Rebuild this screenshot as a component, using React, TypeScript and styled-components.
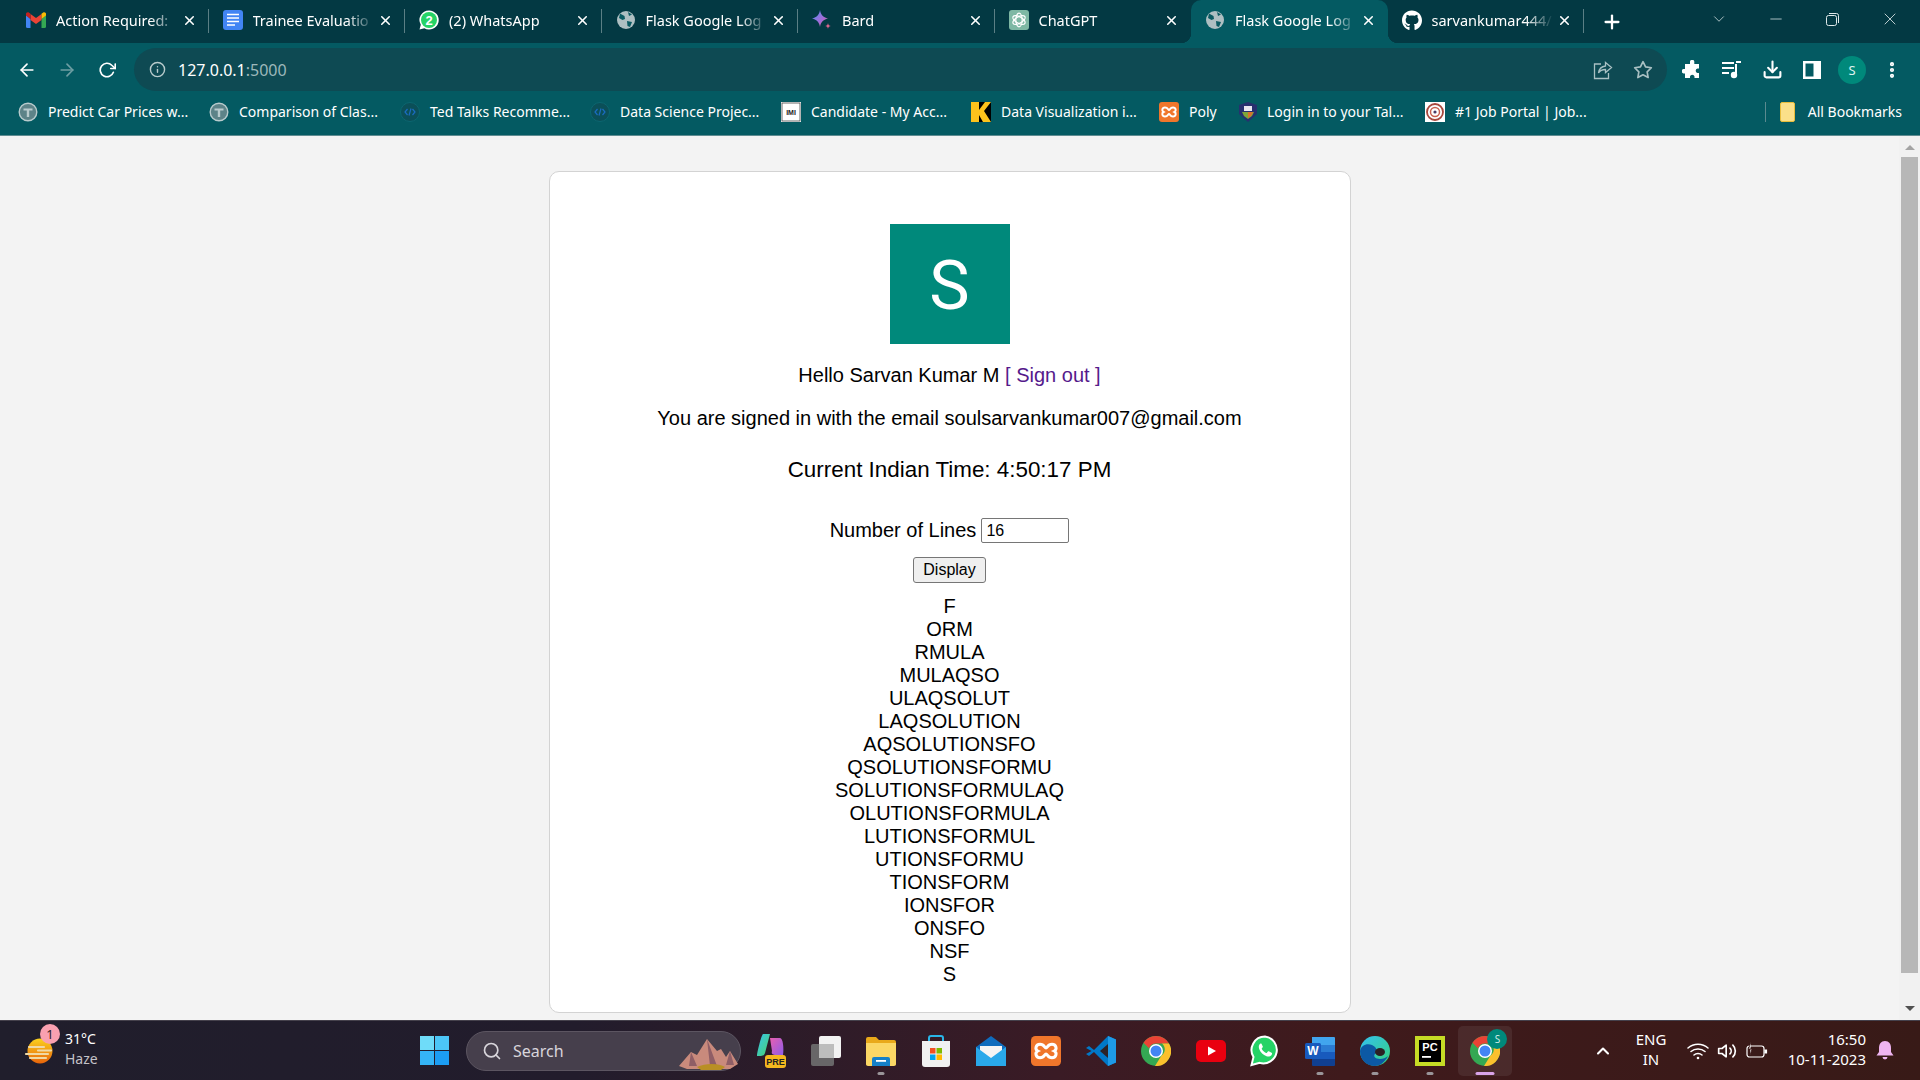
import React from 'react';
import styled, { createGlobalStyle } from 'styled-components';
import { FaGithub } from 'react-icons/fa';
import { FiArrowLeft, FiArrowRight, FiRotateCw, FiInfo, FiMinus, FiX, FiPlus, FiChevronDown, FiChevronUp, FiStar, FiSearch, FiVolume2, FiMoreVertical, FiDownload } from 'react-icons/fi';

const GlobalStyle = createGlobalStyle`
  html, body { margin: 0; padding: 0; height: 100%; overflow: hidden; }
  body { font-family: "Liberation Sans", Arial, sans-serif; }
  * { box-sizing: border-box; }
`;

const Shell = styled.div`
  width: 1920px;
  height: 1080px;
  display: flex;
  flex-direction: column;
  overflow: hidden;
`;

const UI_FONT = `"Noto Sans", "Open Sans", sans-serif`;

/* tab strip */
const TabStrip = styled.div`
  height: 43px;
  flex: none;
  display: flex;
  padding-left: 12px;
  background: #033943;
  font-family: ${UI_FONT};
`;

const Tab = styled.div<{ $active?: boolean; $noDivider?: boolean }>`
  position: relative;
  width: 196.5px;
  flex: none;
  display: flex;
  align-items: center;
  padding: 0 12px 3px 14px;
  color: #fff;
  font-size: 14.5px;
  background: ${(p) => (p.$active ? '#045a62' : 'transparent')};
  border-radius: ${(p) => (p.$active ? '10px 10px 0 0' : '0')};

  &::after {
    content: '';
    position: absolute;
    right: 0;
    top: 9px;
    width: 1px;
    height: 24px;
    background: #5b7f85;
    display: ${(p) => (p.$active || p.$noDivider ? 'none' : 'block')};
  }
`;

const TabFoot = styled.span<{ $side: 'left' | 'right' }>`
  position: absolute;
  bottom: 0;
  width: 10px;
  height: 10px;
  ${(p) => (p.$side === 'left' ? 'left: -10px;' : 'right: -10px;')}
  background: radial-gradient(circle at ${(p) => (p.$side === 'left' ? '0 0' : '100% 0')}, transparent 10px, #045a62 10.500px);
`;

const TabIcon = styled.span`
  width: 20px;
  height: 20px;
  flex: none;
  display: flex;
  align-items: center;
  justify-content: center;
  margin-right: 10px;
`;

const TabTitle = styled.span`
  flex: 1;
  min-width: 0;
  white-space: nowrap;
  mask-image: linear-gradient(90deg, #000 78%, rgba(0, 0, 0, 0.05) 100%);
`;

const TabClose = styled.span`
  flex: none;
  display: flex;
  margin-left: 5px;
  color: #fff;
`;

const NewTab = styled.span`
  margin-left: 17px;
  display: flex;
  align-items: center;
  color: #fff;
`;

const WindowControls = styled.div`
  margin-left: auto;
  padding-right: 2px;
  display: flex;
  align-items: flex-start;
`;

const WindowButton = styled.span`
  width: 57px;
  height: 38px;
  display: flex;
  align-items: center;
  justify-content: center;
  color: #dfe9ea;
`;

/* toolbar */
const Toolbar = styled.div`
  height: 49px;
  flex: none;
  display: flex;
  align-items: center;
  background: #045a62;
  padding: 4px 0 0 7px;
  font-family: ${UI_FONT};
`;

const NavButton = styled.span<{ $dim?: boolean }>`
  width: 40px;
  height: 40px;
  flex: none;
  display: flex;
  align-items: center;
  justify-content: center;
  color: ${(p) => (p.$dim ? '#6e9ea3' : '#fff')};
`;

const Omnibox = styled.div`
  width: 1533px;
  height: 43px;
  margin: 0 5px 0 7px;
  flex: none;
  display: flex;
  align-items: center;
  border-radius: 22px;
  background: #0e4a53;
  padding: 0 4px 0 15px;
  color: #fff;
  font-size: 16px;
`;

const Url = styled.span`
  margin-left: 12px;
  flex: 1;
  & > em {
    font-style: normal;
    color: #9db8bb;
  }
`;

const OmniAction = styled.span`
  width: 40px;
  display: flex;
  justify-content: center;
  color: #a9c0c3;
`;

const ProfileDot = styled.span`
  width: 28px;
  height: 28px;
  border-radius: 50%;
  background: #00897b;
  color: #dff3f0;
  font-size: 13px;
  display: flex;
  align-items: center;
  justify-content: center;
`;

/* bookmarks */
const BookmarkBar = styled.div`
  height: 44px;
  flex: none;
  display: flex;
  align-items: center;
  background: #045a62;
  padding: 0 0 4px 18px;
  color: #fff;
  font-family: ${UI_FONT};
  font-size: 14px;
  border-bottom: 1px solid #5f8c91;
`;

const Bookmark = styled.div<{ $w: number }>`
  width: ${(p) => p.$w}px;
  flex: none;
  display: flex;
  align-items: center;
  gap: 10px;
  white-space: nowrap;
`;

const BookmarkEnd = styled.div`
  margin-left: auto;
  display: flex;
  align-items: center;
  padding-right: 18px;
  white-space: nowrap;
`;

const BookmarkDivider = styled.span`
  width: 1px;
  height: 20px;
  background: #5b8a8f;
  margin-right: 14px;
`;

const FolderIcon = styled.span`
  width: 15px;
  height: 20px;
  border-radius: 2px;
  background: #fbe08a;
  border: 1px solid #e8bd3c;
  margin-right: 13px;
`;

/* page */
const Viewport = styled.div`
  flex: 1;
  min-height: 0;
  display: flex;
  background: #f3f3f3;
`;

const Page = styled.main`
  flex: 1;
  min-width: 0;
  overflow: hidden;
  padding-top: 35px;
`;

const Card = styled.section`
  width: 802px;
  height: 842px;
  margin: 0 auto;
  padding-top: 52px;
  background: #fff;
  border: 1px solid #d3d3d3;
  border-radius: 10px;
  display: flex;
  flex-direction: column;
  align-items: center;
  color: #000;
  font-size: 20px;
  line-height: 23px;
`;

const Avatar = styled.div`
  width: 120px;
  height: 120px;
  flex: none;
  background: #00897b;
  color: #fff;
  font-family: Roboto, sans-serif;
  font-size: 68px;
  line-height: 124px;
  text-align: center;
`;

const Greeting = styled.p`
  margin: 20px 0 0;
`;

const SignOut = styled.a`
  color: #551a8b;
  text-decoration: none;
`;

const EmailLine = styled.p`
  margin: 20px 0 0;
`;

const Clock = styled.h2`
  margin: 26px 0 0;
  font-size: 22.4px;
  line-height: 28px;
  font-weight: 400;
`;

const LinesForm = styled.form`
  margin-top: 34px;
  display: flex;
  flex-direction: column;
  align-items: center;
`;

const FieldRow = styled.div`
  display: flex;
  align-items: center;
  gap: 5px;
`;

const LinesInput = styled.input`
  width: 88px;
  height: 25px;
  padding: 1px 4px;
  border: 1px solid #767676;
  border-radius: 2px;
  background: #fff;
  font: 16px "Liberation Sans", Arial, sans-serif;
  color: #000;
`;

const DisplayButton = styled.button`
  width: 73px;
  height: 26px;
  margin-top: 14px;
  padding: 0;
  background: #efefef;
  border: 1px solid #767676;
  border-radius: 3px;
  font: 16px "Liberation Sans", Arial, sans-serif;
  color: #000;
`;

const Pattern = styled.div`
  margin-top: 12px;
  text-align: center;
`;

const PatternLine = styled.div`
  height: 23px;
`;

const Scrollbar = styled.aside`
  width: 21px;
  flex: none;
  display: flex;
  flex-direction: column;
  align-items: center;
  background: #f1f1f1;
  padding: 9px 0;
`;

const Thumb = styled.div`
  width: 17px;
  height: 816px;
  margin: 7px 0 auto;
  background: #b7b7b7;
`;

const ArrowUp = styled.span`
  width: 0;
  height: 0;
  border: 5px solid transparent;
  border-top: 0;
  border-bottom: 5px solid #a3a3a3;
`;

const ArrowDown = styled.span`
  width: 0;
  height: 0;
  border: 5px solid transparent;
  border-bottom: 0;
  border-top: 5px solid #505050;
`;

/* taskbar */
const Taskbar = styled.footer`
  height: 60px;
  flex: none;
  display: flex;
  align-items: center;
  color: #fff;
  font-family: ${UI_FONT};
  border-top: 1px solid #45414c;
  background: linear-gradient(90deg, #201e2c 0%, #221c2c 30%, #3a1b25 55%, #3f1a1c 70%, #381a17 100%);
`;

const Weather = styled.div`
  width: 420px;
  flex: none;
  display: flex;
  align-items: center;
  padding-left: 24px;
`;

const WeatherIcon = styled.span`
  position: relative;
  width: 30px;
  height: 30px;
  margin-right: 11px;
  flex: none;
`;

const WeatherBadge = styled.span`
  position: absolute;
  top: -12px;
  right: -6px;
  width: 20px;
  height: 20px;
  border-radius: 50%;
  background: #f9a0b0;
  color: #2b1a1e;
  font-size: 13px;
  line-height: 20px;
  text-align: center;
`;

const TwoLines = styled.div<{ $align?: string; $size?: number }>`
  margin-top: -3px;
  font-size: ${(p) => p.$size || 14}px;
  line-height: 20px;
  text-align: ${(p) => p.$align || 'left'};
`;

const Muted = styled.div`
  color: #c4c2c8;
`;

const StartLogo = styled.div`
  width: 29px;
  height: 29px;
  flex: none;
  display: grid;
  grid-template-columns: 1fr 1fr;
  gap: 1px;
  margin-right: 17px;
`;

const StartPane = styled.span<{ $c: string }>`
  background: ${(p) => p.$c};
`;

const SearchPill = styled.div`
  position: relative;
  width: 275px;
  height: 40px;
  flex: none;
  display: flex;
  align-items: center;
  gap: 11px;
  padding-left: 15px;
  border-radius: 20px;
  background: #463f4c;
  border: 1px solid #5c5561;
  color: #d8d5db;
  font-size: 16px;
`;

const SearchArt = styled.span`
  position: absolute;
  right: 1px;
  top: 6px;
  display: flex;
`;

const Apps = styled.div`
  width: 769px;
  flex: none;
  display: flex;
  align-items: center;
  padding-left: 3px;
`;

const AppSlot = styled.div<{ $active?: boolean }>`
  position: relative;
  width: 54.900px;
  height: 50px;
  flex: none;
  display: flex;
  align-items: center;
  justify-content: center;
  border-radius: 5px;
  background: ${(p) => (p.$active ? 'rgba(255,255,255,0.07)' : 'transparent')};
`;

const RunningDot = styled.span<{ $active?: boolean }>`
  position: absolute;
  bottom: 1px;
  left: 50%;
  transform: translateX(-50%);
  width: ${(p) => (p.$active ? '19px' : '7px')};
  height: 3px;
  border-radius: 2px;
  background: ${(p) => (p.$active ? '#d9a3e8' : '#9a9599')};
`;

const ChromeBadge = styled.span`
  position: absolute;
  top: 3px;
  right: 5px;
  width: 20px;
  height: 20px;
  border-radius: 50%;
  background: #00897b;
  color: #cfe9e5;
  font-size: 10px;
  line-height: 20px;
  text-align: center;
`;

const Tray = styled.div`
  flex: 1;
  display: flex;
  align-items: center;
  padding-left: 78px;
`;

const TrayIcon = styled.span<{ $w: number }>`
  width: ${(p) => p.$w}px;
  flex: none;
  display: flex;
  justify-content: center;
`;

const TrayClock = styled.div`
  width: 94px;
  flex: none;
`;

/* drawings */
const Gmail = () => (
  <svg width="20" height="16" viewBox="0 0 20 16">
    <path d="M0 3v11.500A1.500 1.500 0 0 0 1.500 16H4.500V7z" fill="#4285f4" />
    <path d="M20 3v11.500a1.500 1.500 0 0 1-1.500 1.500H15.500V7z" fill="#34a853" />
    <path d="M4.500 8 10 12l5.500-4V2L10 6 4.500 2z" fill="#ea4335" />
    <path d="M0 3.500 4.500 7V1.800L2.800.5C1.500-.400 0 .600 0 2z" fill="#c5221f" />
    <path d="M20 3.500 15.500 7V1.800L17.200.5C18.500-.400 20 .600 20 2z" fill="#fbbc04" />
  </svg>
);

const Docs = () => (
  <svg width="20" height="20" viewBox="0 0 20 20">
    <rect width="20" height="20" rx="3" fill="#4285f4" />
    <path d="M4 5.500h12M4 9h12M4 12.500h12M4 16h8" stroke="#fff" strokeWidth="1.700" transform="translate(0 -1)" />
  </svg>
);

const WhatsappBadge = () => (
  <svg width="20" height="20" viewBox="0 0 20 20">
    <path d="M10 .5a9.500 9.500 0 0 0-8.200 14.300L.5 19.500l4.900-1.300A9.500 9.500 0 1 0 10 .5z" fill="#fff" />
    <circle cx="10" cy="10" r="8" fill="#25d366" />
    <text x="10" y="14.500" fontSize="13" fontWeight="700" fill="#fff" textAnchor="middle" fontFamily="Liberation Sans">2</text>
  </svg>
);

const Globe = () => (
  <svg width="18" height="18" viewBox="0 0 18 18">
    <circle cx="9" cy="9" r="9" fill="#aebfc2" />
    <path d="M3 2.500 7.500 5l.5 3-2.500 1L2 7zM10 10l5 1-2 5-2.500-1zM11 1l4 2.500-3 1.500z" fill="#0a5a62" />
  </svg>
);

const Sparkle = () => (
  <svg width="20" height="20" viewBox="0 0 20 20">
    <defs>
      <linearGradient id="bardFill" x1="0" y1="0" x2="1" y2="1">
        <stop offset="0" stopColor="#4f8df5" />
        <stop offset="0.6" stopColor="#a56cd6" />
        <stop offset="1" stopColor="#e56a7c" />
      </linearGradient>
    </defs>
    <path d="M8 0c.6 4.500 3 7.200 8 8.500-5 1.300-7.400 4-8 8.500-.6-4.500-3-7.200-8-8.500C5 7.200 7.400 4.500 8 0z" fill="url(#bardFill)" />
    <path d="M16 13c.2 1.700 1.100 2.700 3 3-1.900.3-2.800 1.300-3 3-.2-1.700-1.100-2.700-3-3 1.900-.3 2.800-1.300 3-3z" fill="#d9658b" />
  </svg>
);

const ChatGpt = () => (
  <svg width="20" height="20" viewBox="0 0 20 20">
    <rect width="20" height="20" rx="3" fill="#7eb8a4" />
    <g fill="none" stroke="#fff" strokeWidth="1.200">
      <ellipse cx="10" cy="10" rx="3.200" ry="6.800" />
      <ellipse cx="10" cy="10" rx="3.200" ry="6.800" transform="rotate(60 10 10)" />
      <ellipse cx="10" cy="10" rx="3.200" ry="6.800" transform="rotate(120 10 10)" />
    </g>
  </svg>
);

const TCircle = () => (
  <svg width="20" height="20" viewBox="0 0 20 20">
    <circle cx="10" cy="10" r="8.800" fill="#5d8388" stroke="#b9cbcd" strokeWidth="1.400" />
    <path d="M5.500 6.500h9v2h-3.300V15H8.800V8.500H5.500z" fill="#b9cbcd" />
  </svg>
);

const CodeCircle = () => (
  <svg width="20" height="20" viewBox="0 0 20 20">
    <circle cx="10" cy="10" r="9.500" fill="#0b4f58" stroke="#0c6670" />
    <path d="M7.500 7 5 10l2.500 3M12.500 7 15 10l-2.500 3M11 6.500 9 13.500" fill="none" stroke="#1b6cc0" strokeWidth="1.200" />
  </svg>
);

const ImiMark = () => (
  <svg width="20" height="20" viewBox="0 0 20 20">
    <rect width="20" height="20" fill="#fff" />
    <rect x="1" y="1" width="18" height="18" fill="none" stroke="#444" strokeWidth="0.800" />
    <text x="10" y="13" fontSize="7" fontWeight="700" fill="#222" textAnchor="middle" fontFamily="Liberation Sans">IMI</text>
  </svg>
);

const KMark = () => (
  <svg width="20" height="20" viewBox="0 0 20 20">
    <rect width="20" height="20" fill="#000" />
    <path d="M0 0h8v8l6-8h6l-7 9 7 11h-8l-4-7v7H0z" fill="#fdc31c" />
  </svg>
);

const Xampp = ({ size = 20 }: { size?: number }) => (
  <svg width={size} height={size} viewBox="0 0 20 20">
    <rect width="20" height="20" rx="3" fill="#f0762b" />
    <path d="M6 5.500c3 0 3 2.500 4 2.500s1-2.500 4-2.500 3.500 3.500 1.500 4.500c2 1 1.500 4.500-1.500 4.500s-3-2.500-4-2.500-1 2.500-4 2.500S2.500 11 4.500 10C2.500 9 3 5.500 6 5.500z" fill="none" stroke="#fff" strokeWidth="2" />
  </svg>
);

const Crest = () => (
  <svg width="18" height="20" viewBox="0 0 18 20">
    <path d="M0 3 9 0l9 3v9l-9 8-9-8z" fill="#27306f" />
    <path d="M3 10h12l-2 4-4 3-4-3z" fill="#7fa53a" />
    <path d="M5 4h8v5H5z" fill="#e8e6ef" />
    <path d="M9 10h5l-2 4-3 2z" fill="#d9712c" />
  </svg>
);

const TargetMark = () => (
  <svg width="20" height="20" viewBox="0 0 20 20">
    <rect width="20" height="20" fill="#fff" />
    <circle cx="10" cy="10" r="8" fill="none" stroke="#a8473c" strokeWidth="1.800" />
    <circle cx="10" cy="10" r="4.500" fill="none" stroke="#c9604f" strokeWidth="1.500" />
    <circle cx="10" cy="10" r="1.600" fill="#4a3a66" />
  </svg>
);

const Puzzle = () => (
  <svg width="20" height="20" viewBox="0 0 20 20">
    <path d="M8 1.500a2.200 2.200 0 0 1 4.300 0V4H17v4.500h-1.500a2.300 2.300 0 0 0 0 4.500H17V18h-4.500v-1.500a2.300 2.300 0 0 0-4.500 0V18H3v-4.500H1.500a2.300 2.300 0 0 1 0-4.500H3V4h5z" fill="#fff" />
  </svg>
);

const MediaQueue = () => (
  <svg width="20" height="18" viewBox="0 0 20 18" fill="none" stroke="#fff" strokeWidth="2">
    <path d="M0 2h12M0 7h12M0 12h7M14 3v10.500" />
    <path d="M14 1h5" />
    <circle cx="12" cy="14" r="2.200" fill="#fff" />
  </svg>
);

const SidePanel = () => (
  <svg width="18" height="18" viewBox="0 0 18 18">
    <path d="M0 0h18v18H0zM2.500 2.500v13h8v-13z" fill="#fff" fillRule="evenodd" />
  </svg>
);

const ShareBox = () => (
  <svg width="20" height="20" viewBox="0 0 20 20" fill="none" stroke="#a9c0c3" strokeWidth="1.300">
    <path d="M8 4H1.500v14.500h14V13" />
    <path d="M12.500 2.500 18.500 7.500l-6 5V9.500c-3.500 0-5.500 1-7 3.500 .5-4 3-6.500 7-7z" />
  </svg>
);

const RestoreIcon = () => (
  <svg width="13" height="13" viewBox="0 0 13 13" fill="none" stroke="#dfe9ea" strokeWidth="1">
    <rect x="0.500" y="2.500" width="10" height="10" rx="2" />
    <path d="M3 .5h7.500a2 2 0 0 1 2 2V10" />
  </svg>
);

const SunHaze = () => (
  <svg width="30" height="30" viewBox="0 0 30 30">
    <defs>
      <linearGradient id="sunFill" x1="0" y1="0" x2="0" y2="1">
        <stop offset="0" stopColor="#fbd21e" />
        <stop offset="1" stopColor="#e8640a" />
      </linearGradient>
    </defs>
    <circle cx="16" cy="15" r="12.500" fill="url(#sunFill)" />
    <path d="M5 11h15M14 14.500h13M2 18h22M6 22h16" stroke="#f0d9a4" strokeWidth="2.200" strokeLinecap="round" />
  </svg>
);

const Mountains = () => (
  <svg width="60" height="32" viewBox="0 0 60 32">
    <path d="M0 28 12 14l6 3L28 1l10 12 4-2 5 8 4-6 8 13-8 5H8z" fill="#c98a7c" />
    <path d="M12 14l6 14h-8zM28 1l3 27h7zM51 13l4 14h-8z" fill="#8f5e66" />
    <path d="M18 29c8-4 22-4 28 0l-4 3H22z" fill="#b98f24" />
  </svg>
);

const Copilot = () => (
  <svg width="30" height="34" viewBox="0 0 30 34">
    <defs>
      <linearGradient id="copA" x1="0" y1="0" x2="1" y2="1">
        <stop offset="0" stopColor="#36c6f0" />
        <stop offset="1" stopColor="#4bd06a" />
      </linearGradient>
      <linearGradient id="copB" x1="0" y1="0" x2="1" y2="1">
        <stop offset="0" stopColor="#e85fb0" />
        <stop offset="1" stopColor="#8f5ce8" />
      </linearGradient>
    </defs>
    <path d="M7 0h7l-5 19c-.5 2-2 3-4 3H1c0-3 4-20 6-22z" fill="url(#copA)" />
    <path d="M14 4h10c3 0 4 10 3 17h-7c-3 0-5-1-4-4z" fill="url(#copB)" />
    <rect x="9" y="21" width="21" height="13" rx="3" fill="#f5b81f" />
    <text x="19.500" y="31" fontSize="9" fontWeight="700" fill="#222" textAnchor="middle" fontFamily="Liberation Sans">PRE</text>
  </svg>
);

const TaskView = () => (
  <svg width="30" height="30" viewBox="0 0 30 30">
    <rect x="8" y="0" width="22" height="22" rx="2" fill="#f2f2f2" />
    <rect x="0" y="8" width="23" height="22" rx="2" fill="#6f6f6f" fillOpacity="0.9" />
    <rect x="8" y="8" width="15" height="14" fill="#bdbdbd" />
  </svg>
);

const Folder = () => (
  <svg width="30" height="30" viewBox="0 0 30 30">
    <path d="M0 3a2 2 0 0 1 2-2h8l3 3h15a2 2 0 0 1 2 2v22a1 1 0 0 1-1 1H1a1 1 0 0 1-1-1z" fill="#e9a91a" />
    <path d="M0 7h30v21a2 2 0 0 1-2 2H2a2 2 0 0 1-2-2z" fill="#fbd765" />
    <path d="M6 23a2 2 0 0 1 2-2h14a2 2 0 0 1 2 2v7H6z" fill="#1480c8" />
    <rect x="10" y="24" width="10" height="1.800" fill="#fff" />
  </svg>
);

const StoreBag = () => (
  <svg width="30" height="32" viewBox="0 0 30 32">
    <path d="M8 7V3a2 2 0 0 1 2-2h10a2 2 0 0 1 2 2v4" fill="none" stroke="#29b6e8" strokeWidth="2" />
    <path d="M1 6h28v23a3 3 0 0 1-3 3H4a3 3 0 0 1-3-3z" fill="#f1f1f1" />
    <rect x="9" y="13" width="5.500" height="5.500" fill="#f25022" />
    <rect x="15.500" y="13" width="5.500" height="5.500" fill="#7fba00" />
    <rect x="9" y="19.500" width="5.500" height="5.500" fill="#00a4ef" />
    <rect x="15.500" y="19.500" width="5.500" height="5.500" fill="#ffb900" />
  </svg>
);

const MailIcon = () => (
  <svg width="30" height="30" viewBox="0 0 30 30">
    <path d="M15 0 30 11v19H0V11z" fill="#0f6cbd" />
    <path d="M4 10h22v5l-11 8-11-8z" fill="#f4f4f4" />
    <path d="M0 11l15 11 15-11v19H0z" fill="#29a8ea" />
  </svg>
);

const VsCode = () => (
  <svg width="30" height="30" viewBox="0 0 30 30">
    <path d="M22 0l8 3.500v23L22 30 8 16l-5 4-3-2 5.500-3L0 12l3-2 5 4z" fill="#0078c8" />
    <path d="M22 0l8 3.500v23L22 30z" fill="#1e9ae6" />
    <path d="M22 8l-8 7 8 7z" fill="#2c2226" />
  </svg>
);

const Chrome = () => (
  <svg width="30" height="30" viewBox="0 0 30 30">
    <circle cx="15" cy="15" r="15" fill="#34a853" />
    <path d="M15 0a15 15 0 0 1 13 7.500H15a7.500 7.500 0 0 0-7 4.700L2.500 6.800A15 15 0 0 1 15 0z" fill="#ea4335" />
    <path d="M28 7.500A15 15 0 0 1 14 30l6.500-10.500a7.500 7.500 0 0 0 .5-12z" fill="#fbc02d" />
    <circle cx="15" cy="15" r="7" fill="#fff" />
    <circle cx="15" cy="15" r="5.500" fill="#4285f4" />
  </svg>
);

const YouTube = () => (
  <svg width="30" height="22" viewBox="0 0 30 22">
    <rect width="30" height="22" rx="5" fill="#e9000f" />
    <path d="M12 6.500 20 11l-8 4.500z" fill="#fff" />
  </svg>
);

const WhatsappApp = () => (
  <svg width="30" height="32" viewBox="0 0 30 32">
    <path d="M15 1.500A13.500 13.500 0 0 0 3.500 22L1.500 30l8.200-2.100A13.500 13.500 0 1 0 15 1.500z" fill="#25d366" stroke="#fff" strokeWidth="2" />
    <path d="M10.500 8.500c-1.500 1-2.200 3-1.300 5.500 1.300 3.400 4 6 7.300 7.200 2.300.8 4.300.1 5.200-1.500.4-.7.400-1.500.3-1.800l-3.200-1.600c-.4-.2-.7-.1-.9.2l-1 1.300c-.2.300-.5.300-.8.200-1.800-.8-3.400-2.200-4.300-4-.1-.3-.1-.5.100-.7l.8-1c.2-.2.200-.5.100-.8L11.500 8.800c-.2-.4-.6-.5-1-.3z" fill="#fff" />
  </svg>
);

const Word = () => (
  <svg width="30" height="30" viewBox="0 0 30 30">
    <path d="M7 1h22a1 1 0 0 1 1 1v7H7z" fill="#41a5ee" />
    <rect x="7" y="9" width="23" height="7" fill="#2b7cd3" />
    <rect x="7" y="16" width="23" height="7" fill="#185abd" />
    <path d="M7 23h23v6a1 1 0 0 1-1 1H8a1 1 0 0 1-1-1z" fill="#103f91" />
    <rect x="0" y="7" width="16" height="16" rx="1.500" fill="#185abd" />
    <text x="8" y="19" fontSize="12" fontWeight="700" fill="#fff" textAnchor="middle" fontFamily="Liberation Sans">W</text>
  </svg>
);

const Edge = () => (
  <svg width="30" height="30" viewBox="0 0 30 30">
    <defs>
      <linearGradient id="edgeFill" x1="0" y1="0" x2="1" y2="1">
        <stop offset="0" stopColor="#35c1f1" />
        <stop offset="1" stopColor="#34d07b" />
      </linearGradient>
    </defs>
    <circle cx="15" cy="15" r="15" fill="url(#edgeFill)" />
    <path d="M0 15c1-6 7-8 12-6 5 2 6 7 3 9-2 2 0 5 5 5 3 0 6-1 8-3-3 6-8 10-13 10C7 30 0 24 0 15z" fill="#0c59a4" />
    <ellipse cx="20" cy="16" rx="5" ry="4" fill="#2c2024" />
  </svg>
);

const PyCharm = () => (
  <svg width="30" height="30" viewBox="0 0 30 30">
    <rect width="30" height="30" fill="#c6dc25" />
    <rect x="4" y="4" width="22" height="22" fill="#000" />
    <text x="15" y="15" fontSize="11" fontWeight="700" fill="#fff" textAnchor="middle" fontFamily="Liberation Sans">PC</text>
    <rect x="7" y="20" width="9" height="1.800" fill="#fff" />
  </svg>
);

const WifiArcs = () => (
  <svg width="22" height="18" viewBox="0 0 22 18" fill="none" stroke="#fff" strokeWidth="1.500" strokeLinecap="round">
    <path d="M1 6c5.500-5 14.500-5 20 0M4 9.500c3.800-3.400 10.200-3.400 14 0M7 13c2.200-2 5.800-2 8 0" />
    <circle cx="11" cy="16" r="1.300" fill="#fff" stroke="none" />
  </svg>
);

const BatteryCharge = () => (
  <svg width="22" height="18" viewBox="0 0 22 18" fill="none" stroke="#fff" strokeWidth="1.200">
    <rect x="1" y="4" width="17" height="11" rx="2.500" />
    <path d="M18.500 8h2v3h-2" fill="#fff" />
    <path d="M5 0 2.500 7H6L4 13" fill="#fff" stroke="#3c1a1a" strokeWidth="0.800" />
  </svg>
);

const BellSolid = () => (
  <svg width="18" height="20" viewBox="0 0 18 20" fill="#eeb4f0">
    <path d="M9 0C5 0 3 3 3 7v4l-2.500 3.500h17L15 11V7c0-4-2-7-6-7z" />
    <path d="M6.500 16h5a2.500 2.500 0 0 1-5 0z" />
  </svg>
);

const PATTERN = [
  'F',
  'ORM',
  'RMULA',
  'MULAQSO',
  'ULAQSOLUT',
  'LAQSOLUTION',
  'AQSOLUTIONSFO',
  'QSOLUTIONSFORMU',
  'SOLUTIONSFORMULAQ',
  'OLUTIONSFORMULA',
  'LUTIONSFORMUL',
  'UTIONSFORMU',
  'TIONSFORM',
  'IONSFOR',
  'ONSFO',
  'NSF',
  'S',
];

const TABS = [
  { title: 'Action Required:', icon: <Gmail /> },
  { title: 'Trainee Evaluatio', icon: <Docs /> },
  { title: '(2) WhatsApp', icon: <WhatsappBadge /> },
  { title: 'Flask Google Log', icon: <Globe /> },
  { title: 'Bard', icon: <Sparkle /> },
  { title: 'ChatGPT', icon: <ChatGpt /> },
  { title: 'Flask Google Log', icon: <Globe />, active: true },
  { title: 'sarvankumar444/', icon: <FaGithub size={21} color="#fff" /> },
];

const BOOKMARKS = [
  { w: 191, label: 'Predict Car Prices w...', icon: <TCircle /> },
  { w: 191, label: 'Comparison of Clas...', icon: <TCircle /> },
  { w: 190, label: 'Ted Talks Recomme...', icon: <CodeCircle /> },
  { w: 191, label: 'Data Science Projec...', icon: <CodeCircle /> },
  { w: 190, label: 'Candidate - My Acc...', icon: <ImiMark /> },
  { w: 188, label: 'Data Visualization i...', icon: <KMark /> },
  { w: 80, label: 'Poly', icon: <Xampp /> },
  { w: 186, label: 'Login in to your Tal...', icon: <Crest /> },
  { w: 200, label: '#1 Job Portal | Job...', icon: <TargetMark /> },
];

const APPS: { key: string; icon: React.ReactNode; running?: boolean }[] = [
  { key: 'copilot', icon: <Copilot /> },
  { key: 'taskview', icon: <TaskView /> },
  { key: 'folder', icon: <Folder />, running: true },
  { key: 'store', icon: <StoreBag /> },
  { key: 'mail', icon: <MailIcon /> },
  { key: 'xampp', icon: <Xampp size={30} /> },
  { key: 'vscode', icon: <VsCode /> },
  { key: 'chrome', icon: <Chrome /> },
  { key: 'youtube', icon: <YouTube /> },
  { key: 'whatsapp', icon: <WhatsappApp /> },
  { key: 'word', icon: <Word />, running: true },
  { key: 'edge', icon: <Edge />, running: true },
  { key: 'pycharm', icon: <PyCharm />, running: true },
];

export default function App() {
  return (
    <Shell>
      <GlobalStyle />
      <TabStrip>
        {TABS.map((tab, i) => (
          <Tab key={i} $active={tab.active} $noDivider={i === 5}>
            {tab.active && <TabFoot $side="left" />}
            <TabIcon>{tab.icon}</TabIcon>
            <TabTitle>{tab.title}</TabTitle>
            <TabClose><FiX size={15} strokeWidth={2.5} /></TabClose>
            {tab.active && <TabFoot $side="right" />}
          </Tab>
        ))}
        <NewTab><FiPlus size={22} strokeWidth={2.5} /></NewTab>
        <WindowControls>
          <WindowButton><FiChevronDown size={18} strokeWidth={1} /></WindowButton>
          <WindowButton><FiMinus size={18} strokeWidth={1} /></WindowButton>
          <WindowButton><RestoreIcon /></WindowButton>
          <WindowButton><FiX size={20} strokeWidth={1} /></WindowButton>
        </WindowControls>
      </TabStrip>

      <Toolbar>
        <NavButton><FiArrowLeft size={20} strokeWidth={2} /></NavButton>
        <NavButton $dim><FiArrowRight size={20} strokeWidth={2} /></NavButton>
        <NavButton><FiRotateCw size={18} strokeWidth={2.2} /></NavButton>
        <Omnibox>
          <FiInfo size={17} color="#b9cccd" />
          <Url>127.0.0.1<em>:5000</em></Url>
          <OmniAction><ShareBox /></OmniAction>
          <OmniAction><FiStar size={20} /></OmniAction>
        </Omnibox>
        <NavButton><Puzzle /></NavButton>
        <NavButton><MediaQueue /></NavButton>
        <NavButton><FiDownload size={21} strokeWidth={2.4} /></NavButton>
        <NavButton><SidePanel /></NavButton>
        <NavButton><ProfileDot>S</ProfileDot></NavButton>
        <NavButton><FiMoreVertical size={20} strokeWidth={3} /></NavButton>
      </Toolbar>

      <BookmarkBar>
        {BOOKMARKS.map((b) => (
          <Bookmark key={b.label} $w={b.w}>
            {b.icon}
            {b.label}
          </Bookmark>
        ))}
        <BookmarkEnd>
          <BookmarkDivider />
          <FolderIcon />
          All Bookmarks
        </BookmarkEnd>
      </BookmarkBar>

      <Viewport>
        <Page>
          <Card>
            <Avatar>S</Avatar>
            <Greeting>Hello Sarvan Kumar M <SignOut href="#">[ Sign out ]</SignOut></Greeting>
            <EmailLine>You are signed in with the email soulsarvankumar007@gmail.com</EmailLine>
            <Clock>Current Indian Time: 4:50:17 PM</Clock>
            <LinesForm>
              <FieldRow>
                <label htmlFor="lines">Number of Lines</label>
                <LinesInput id="lines" defaultValue="16" />
              </FieldRow>
              <DisplayButton type="button">Display</DisplayButton>
            </LinesForm>
            <Pattern>
              {PATTERN.map((line, i) => (
                <PatternLine key={i}>{line}</PatternLine>
              ))}
            </Pattern>
          </Card>
        </Page>
        <Scrollbar>
          <ArrowUp />
          <Thumb />
          <ArrowDown />
        </Scrollbar>
      </Viewport>

      <Taskbar>
        <Weather>
          <WeatherIcon>
            <SunHaze />
            <WeatherBadge>1</WeatherBadge>
          </WeatherIcon>
          <TwoLines>
            31°C
            <Muted>Haze</Muted>
          </TwoLines>
        </Weather>
        <StartLogo>
          <StartPane $c="#6fdcf9" />
          <StartPane $c="#4cc6f7" />
          <StartPane $c="#35b4f6" />
          <StartPane $c="#1c9df3" />
        </StartLogo>
        <SearchPill>
          <FiSearch size={20} />
          Search
          <SearchArt><Mountains /></SearchArt>
        </SearchPill>
        <Apps>
          {APPS.map((app) => (
            <AppSlot key={app.key}>
              {app.icon}
              {app.running && <RunningDot />}
            </AppSlot>
          ))}
          <AppSlot $active>
            <Chrome />
            <ChromeBadge>S</ChromeBadge>
            <RunningDot $active />
          </AppSlot>
        </Apps>
        <Tray>
          <TrayIcon $w={30}><FiChevronUp size={20} strokeWidth={2.5} /></TrayIcon>
          <TrayIcon $w={66}>
            <TwoLines $align="center" $size={15}>ENG<br />IN</TwoLines>
          </TrayIcon>
          <TrayIcon $w={28}><WifiArcs /></TrayIcon>
          <TrayIcon $w={30}><FiVolume2 size={20} /></TrayIcon>
          <TrayIcon $w={30}><BatteryCharge /></TrayIcon>
          <TrayClock>
            <TwoLines $align="right" $size={15}>16:50<br />10-11-2023</TwoLines>
          </TrayClock>
          <TrayIcon $w={38}><BellSolid /></TrayIcon>
        </Tray>
      </Taskbar>
    </Shell>
  );
}
